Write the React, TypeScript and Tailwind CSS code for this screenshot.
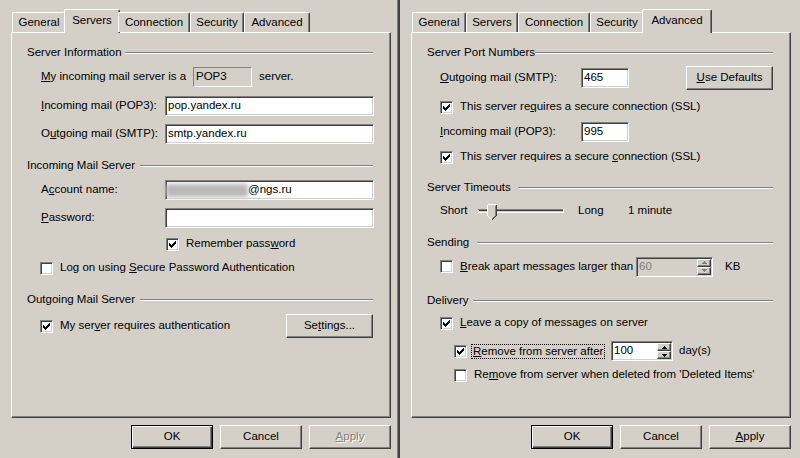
import React from 'react'

const SUNKEN =
  'border border-t-[#808080] border-l-[#808080] border-b-white border-r-white shadow-[inset_1px_1px_0_#404040,inset_-1px_-1px_0_#d4d0c8]'
const RAISED =
  'border border-t-white border-l-white border-b-[#404040] border-r-[#404040] shadow-[inset_-1px_-1px_0_#808080]'
const DEFAULT_BTN =
  'border border-black shadow-[inset_1px_1px_0_#fff,inset_-1px_-1px_0_#404040,inset_-2px_-2px_0_#808080]'

const TABS = [
  { label: 'General', w: 'w-[54px]', wa: 'w-[58px]' },
  { label: 'Servers', w: 'w-[52px]', wa: 'w-[56px]' },
  { label: 'Connection', w: 'w-[72px]', wa: 'w-[76px]' },
  { label: 'Security', w: 'w-[54px]', wa: 'w-[58px]' },
  { label: 'Advanced', w: 'w-[66px]', wa: 'w-[70px]' },
]

const CHECK = ['......#', '.....##', '#...###', '##.###.', '#####..', '.###...', '..#....']

function U({ children }: { children: React.ReactNode }) {
  return <span className="underline underline-offset-[1px]">{children}</span>
}

function Check({ checked }: { checked?: boolean }) {
  return (
    <span className={`w-[13px] h-[13px] bg-white ${SUNKEN} flex items-center justify-center shrink-0`}>
      {checked && (
        <svg width="7" height="7" viewBox="0 0 7 7" shapeRendering="crispEdges">
          {CHECK.flatMap((row, y) =>
            row.split('').map((c, x) => (c === '#' ? <rect key={`${x}-${y}`} x={x} y={y} width="1" height="1" fill="#000" /> : null))
          )}
        </svg>
      )}
    </span>
  )
}

function CheckRow({ checked, children, className = '' }: { checked?: boolean; children: React.ReactNode; className?: string }) {
  return (
    <div className={`flex items-center h-[14px] gap-[7px] ${className}`}>
      <Check checked={checked} />
      <span className="whitespace-nowrap">{children}</span>
    </div>
  )
}

function Group({ title, w, className = '' }: { title: string; w: string; className?: string }) {
  return (
    <div className={`flex items-center h-[14px] pl-[15px] pr-[17px] ${className}`}>
      <span className={`${w} whitespace-nowrap`}>{title}</span>
      <span className="flex-1 h-[2px] border-t border-t-[#808080] border-b border-b-white" />
    </div>
  )
}

function Edit({ w, children }: { w: string; children?: React.ReactNode }) {
  return (
    <div className={`${w} h-[20px] bg-white ${SUNKEN} flex items-center px-[2px] whitespace-nowrap`}>{children}</div>
  )
}

function Arrow({ up, gray }: { up?: boolean; gray?: boolean }) {
  return (
    <svg width="5" height="3" viewBox="0 0 5 3" shapeRendering="crispEdges">
      <path d={up ? 'M2 0h1v1h1v1h1v1H0V2h1V1h1z' : 'M0 0h5v1H4v1H3v1H2V2H1V1H0z'} fill={gray ? '#808080' : '#000'} />
    </svg>
  )
}

function Spinner({ w, value, disabled }: { w: string; value: string; disabled?: boolean }) {
  return (
    <div className={`${w} h-[20px] ${disabled ? 'bg-[#d4d0c8] text-[#808080]' : 'bg-white'} ${SUNKEN} flex`}>
      <span className="flex-1 flex items-center px-[2px]">{value}</span>
      <div className="w-[15px] flex flex-col py-px pr-px">
        <div className={`flex-1 bg-[#d4d0c8] ${RAISED} flex items-center justify-center`}>
          <Arrow up gray={disabled} />
        </div>
        <div className={`flex-1 bg-[#d4d0c8] ${RAISED} flex items-center justify-center`}>
          <Arrow gray={disabled} />
        </div>
      </div>
    </div>
  )
}

function Button({ w, h = 'h-[24px]', def, disabled, children }: { w: string; h?: string; def?: boolean; disabled?: boolean; children: React.ReactNode }) {
  return (
    <div
      className={`${w} ${h} ${def ? DEFAULT_BTN : RAISED} flex items-center justify-center ${
        disabled ? 'text-[#808080] [text-shadow:1px_1px_0_#fff]' : ''
      }`}
    >
      {children}
    </div>
  )
}

function Slider() {
  return (
    <svg width="86" height="20" viewBox="0 0 86 20" shapeRendering="crispEdges">
      <rect x="0" y="8" width="86" height="1" fill="#808080" />
      <rect x="1" y="9" width="84" height="1" fill="#404040" />
      <rect x="0" y="11" width="86" height="1" fill="#fff" />
      <rect x="85" y="8" width="1" height="4" fill="#fff" />
      <path d="M9 3h10v11l-5 5l-5-5z" fill="#d4d0c8" />
      <path d="M9 3h10M9 3v11l5 5" stroke="#fff" strokeWidth="1" fill="none" transform="translate(0.5 0.5)" />
      <path d="M19 3v11l-5 5" stroke="#404040" strokeWidth="1" fill="none" transform="translate(-0.5 0.5)" />
      <path d="M18 4v10l-4 4" stroke="#808080" strokeWidth="1" fill="none" transform="translate(-0.5 0.5)" />
    </svg>
  )
}

function Dialog({ active, applyDisabled, children }: { active: string; applyDisabled?: boolean; children: React.ReactNode }) {
  return (
    <div className="flex flex-col">
      <div className="flex items-end h-[24px] mt-[9px] pl-[12px] relative z-10">
        {TABS.map(t =>
          t.label === active ? (
            <div
              key={t.label}
              className={`${t.wa} -mx-[2px] h-[24px] bg-[#d4d0c8] border-t border-l border-t-white border-l-white border-r border-r-[#404040] shadow-[inset_-1px_0_0_#808080] rounded-tl-[2px] rounded-tr-[2px] flex items-center justify-center pb-[2px]`}
            >
              {t.label}
            </div>
          ) : (
            <div
              key={t.label}
              className={`${t.w} h-[20px] mb-px bg-[#d4d0c8] border-t border-l border-t-white border-l-white border-r border-r-[#404040] shadow-[inset_-1px_0_0_#808080] rounded-tl-[2px] rounded-tr-[2px] flex items-center justify-center`}
            >
              {t.label}
            </div>
          )
        )}
      </div>
      <div
        className={`-mt-px ml-[11px] w-[380px] h-[386px] border border-t-white border-l-white border-b-[#404040] border-r-[#404040] shadow-[inset_-1px_-1px_0_#808080] flex flex-col`}
      >
        {children}
      </div>
      <div className="ml-[11px] w-[380px] mt-[7px] flex justify-end gap-[7px]">
        <Button w="w-[82px]" def>
          OK
        </Button>
        <Button w="w-[82px]">Cancel</Button>
        <Button w="w-[82px]" disabled={applyDisabled}>
          <U>A</U>pply
        </Button>
      </div>
    </div>
  )
}

function ServersTab() {
  return (
    <>
      <Group title="Server Information" w="w-[98px]" className="mt-[13px]" />
      <div className="flex items-center h-[20px] mt-[7px] pl-[29px]">
        <span className="w-[152px] whitespace-nowrap">
          <U>M</U>y incoming mail server is a
        </span>
        <span className="w-[59px] h-[20px] border border-t-[#808080] border-l-[#808080] border-b-white border-r-white flex items-center px-[2px]">
          POP3
        </span>
        <span className="ml-[7px]">server.</span>
      </div>
      <div className="flex items-center h-[20px] mt-[9px] pl-[29px]">
        <span className="w-[124px] whitespace-nowrap">
          <U>I</U>ncoming mail (POP3):
        </span>
        <Edit w="w-[209px]">pop.yandex.ru</Edit>
      </div>
      <div className="flex items-center h-[20px] mt-[8px] pl-[29px]">
        <span className="w-[124px] whitespace-nowrap">
          O<U>u</U>tgoing mail (SMTP):
        </span>
        <Edit w="w-[209px]">smtp.yandex.ru</Edit>
      </div>
      <Group title="Incoming Mail Server" w="w-[113px]" className="mt-[15px]" />
      <div className="flex items-center h-[20px] mt-[7px] pl-[29px]">
        <span className="w-[124px] whitespace-nowrap">
          A<U>c</U>count name:
        </span>
        <Edit w="w-[209px]">
          <span className="w-[82px] h-[13px] bg-[#b8b8b8] blur-[2px] -ml-[2px]" />
          <span>@ngs.ru</span>
        </Edit>
      </div>
      <div className="flex items-center h-[20px] mt-[8px] pl-[29px]">
        <span className="w-[124px] whitespace-nowrap">
          <U>P</U>assword:
        </span>
        <Edit w="w-[209px]" />
      </div>
      <CheckRow checked className="mt-[9px] pl-[154px] gap-[6px]">
        Remember pass<U>w</U>ord
      </CheckRow>
      <CheckRow className="mt-[10px] pl-[28px]">
        Log on using <U>S</U>ecure Password Authentication
      </CheckRow>
      <Group title="Outgoing Mail Server" w="w-[113px]" className="mt-[18px]" />
      <div className="flex items-center h-[24px] mt-[7px] pl-[28px] pr-[17px]">
        <Check checked />
        <span className="ml-[7px] whitespace-nowrap">
          My ser<U>v</U>er requires authentication
        </span>
        <span className="ml-auto">
          <Button w="w-[87px]">
            Se<U>t</U>tings...
          </Button>
        </span>
      </div>
    </>
  )
}

function AdvancedTab() {
  return (
    <>
      <Group title="Server Port Numbers" w="w-[108px]" className="mt-[13px]" />
      <div className="flex items-center h-[24px] mt-[6px] pl-[28px] pr-[17px]">
        <span className="w-[141px] whitespace-nowrap">
          <U>O</U>utgoing mail (SMTP):
        </span>
        <Edit w="w-[48px]">465</Edit>
        <span className="ml-auto">
          <Button w="w-[87px]">
            <U>U</U>se Defaults
          </Button>
        </span>
      </div>
      <CheckRow checked className="mt-[10px] pl-[28px]">
        This server re<U>q</U>uires a secure connection (SSL)
      </CheckRow>
      <div className="flex items-center h-[20px] mt-[8px] pl-[28px]">
        <span className="w-[141px] whitespace-nowrap">
          <U>I</U>ncoming mail (POP3):
        </span>
        <Edit w="w-[48px]">995</Edit>
      </div>
      <CheckRow checked className="mt-[8px] pl-[28px]">
        This server requires a secure <U>c</U>onnection (SSL)
      </CheckRow>
      <Group title="Server Timeouts" w="w-[91px]" className="mt-[17px]" />
      <div className="flex items-center h-[20px] mt-[6px] pl-[28px]">
        <span className="w-[38px]">Short</span>
        <Slider />
        <span className="ml-[14px] w-[50px]">Long</span>
        <span>1 minute</span>
      </div>
      <Group title="Sending" w="w-[50px]" className="mt-[15px]" />
      <div className="flex items-center h-[21px] mt-[6px] pl-[28px]">
        <Check />
        <span className="ml-[7px] w-[176px] whitespace-nowrap">
          <U>B</U>reak apart messages larger than
        </span>
        <Spinner w="w-[77px]" value="60" disabled />
        <span className="ml-[12px]">KB</span>
      </div>
      <Group title="Delivery" w="w-[46px]" className="mt-[17px]" />
      <CheckRow checked className="mt-[8px] pl-[28px]">
        <U>L</U>eave a copy of messages on server
      </CheckRow>
      <div className="flex items-center h-[20px] mt-[11px] pl-[42px]">
        <Check checked />
        <span className="ml-[4px] px-px border border-dotted border-black leading-[13px] w-[134px] whitespace-nowrap">
          <U>R</U>emove from server after
        </span>
        <span className="ml-[6px]">
          <Spinner w="w-[62px]" value="100" />
        </span>
        <span className="ml-[6px]">day(s)</span>
      </div>
      <CheckRow className="mt-[7px] pl-[42px]">
        Re<U>m</U>ove from server when deleted from 'Deleted Items'
      </CheckRow>
    </>
  )
}

export default function App() {
  return (
    <div className="w-[800px] h-[458px] bg-[#d4d0c8] flex overflow-hidden text-[11.5px] leading-none text-black font-['Liberation_Sans',Arial,sans-serif]">
      <div className="w-[397px] shrink-0">
        <Dialog active="Servers" applyDisabled>
          <ServersTab />
        </Dialog>
      </div>
      <div className="w-[3px] shrink-0 flex">
        <span className="w-px bg-[#808080]" />
        <span className="w-[2px] bg-[#404040]" />
      </div>
      <div className="flex-1">
        <Dialog active="Advanced">
          <AdvancedTab />
        </Dialog>
      </div>
    </div>
  )
}
